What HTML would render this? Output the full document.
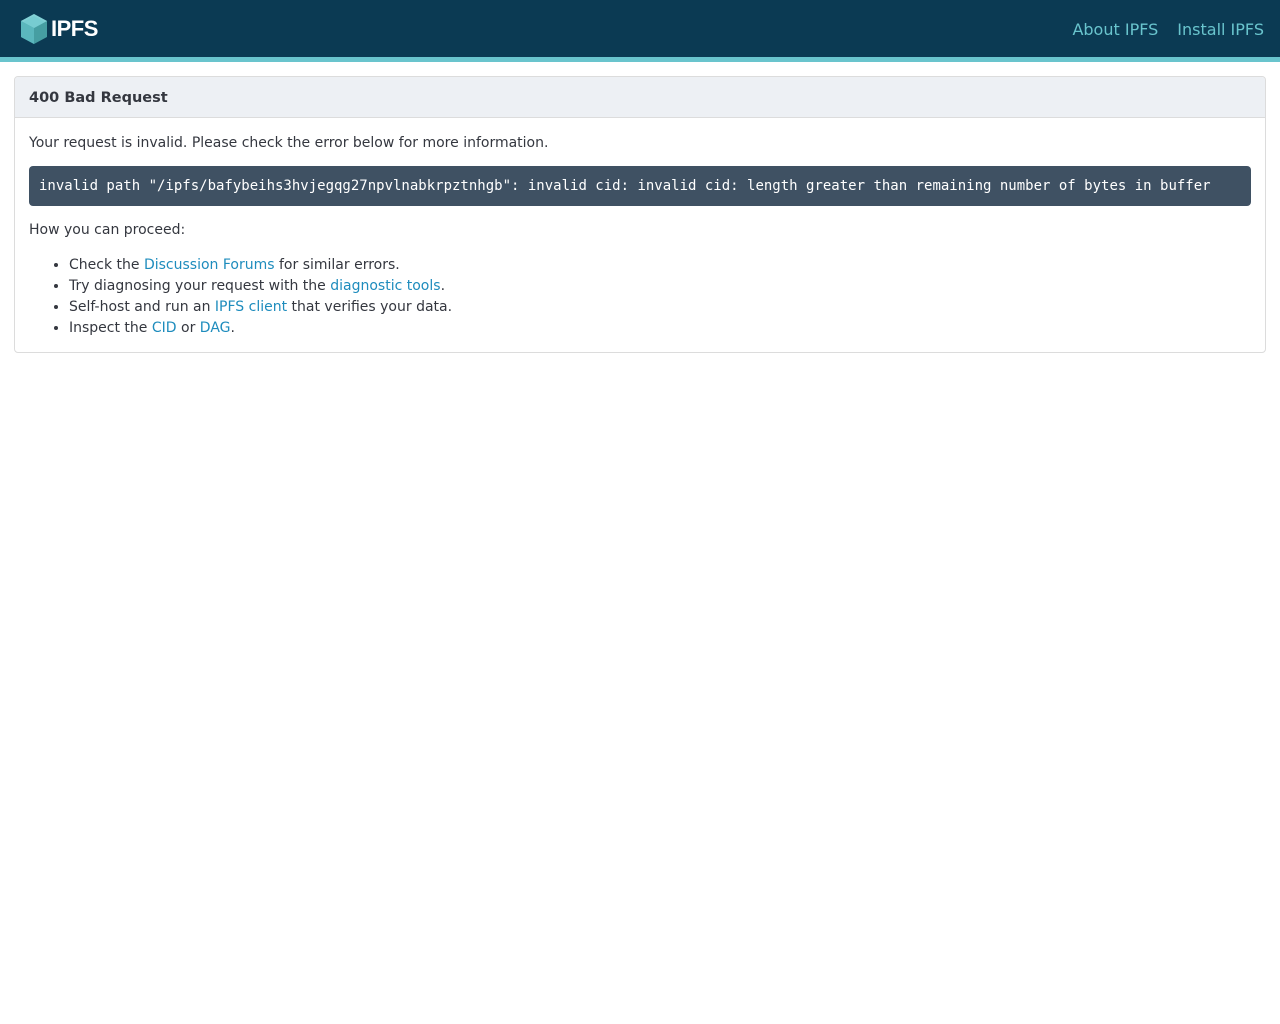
<!DOCTYPE html>
<html><head><meta charset="utf-8"><style>
body{margin:0;background:#fff;font-family:"DejaVu Sans","Liberation Sans",sans-serif;font-size:14px;color:#34373f}
.hdr{height:57px;background:#0b3a53;border-bottom:5px solid #69c4cd;position:relative}
.logo{position:absolute;left:20px;top:13px;display:flex;align-items:center}
.logo span{color:#fff;font-family:"Liberation Sans",sans-serif;font-size:22px;font-weight:bold;margin-left:3px;letter-spacing:-0.5px}
.nav{position:absolute;right:16px;top:20px;font-size:16px}
.nav a{color:#69c4cd;text-decoration:none;margin-left:19px}
.card{position:absolute;left:14px;top:76px;width:1250px;height:275px;border:1px solid #dcdcdc;border-radius:4px;overflow:hidden}
.ch{height:40px;background:#edf0f4;border-bottom:1px solid #dcdcdc;padding-left:14px;line-height:42px;font-weight:bold;font-size:14.5px}
.cb{padding:0 14px}
p{margin:0}
pre{background:#3f5163;color:#fff;font-family:"DejaVu Sans Mono",monospace;font-size:14px;border-radius:4px;margin:0;padding:0 10px;height:40px;line-height:40px}
ul{margin:0;padding-left:40px}
li{line-height:21px}
a{color:#1e8cbd;text-decoration:none}
</style></head><body>
<div class="hdr"><div class="logo"><svg width="28" height="32" viewBox="0 0 28 32"><polygon points="14,1 27,8 27,24 14,31 1,24 1,8" fill="#469ea2"/><polygon points="14,1 27,8 14,15 1,8" fill="#83d0d5"/><polygon points="1,8 14,15 14,31 1,24" fill="#5bb7bd"/><polygon points="3,9 14,3 25,9 14,15" fill="#6fc9cf" opacity=".6"/></svg><span>IPFS</span></div>
<div class="nav"><a>About IPFS</a><a>Install IPFS</a></div></div>
<div class="card"><div class="ch">400 Bad Request</div>
<div class="cb"><p style="margin-top:16px;line-height:19px">Your request is invalid. Please check the error below for more information.</p>
<pre style="margin-top:13px">invalid path "/ipfs/bafybeihs3hvjegqg27npvlnabkrpztnhgb": invalid cid: invalid cid: length greater than remaining number of bytes in buffer</pre>
<p style="margin-top:15px;line-height:19px">How you can proceed:</p>
<ul style="margin-top:15px"><li>Check the <a>Discussion Forums</a> for similar errors.</li><li>Try diagnosing your request with the <a>diagnostic tools</a>.</li><li>Self-host and run an <a>IPFS client</a> that verifies your data.</li><li>Inspect the <a>CID</a> or <a>DAG</a>.</li></ul></div></div>
</body></html>
